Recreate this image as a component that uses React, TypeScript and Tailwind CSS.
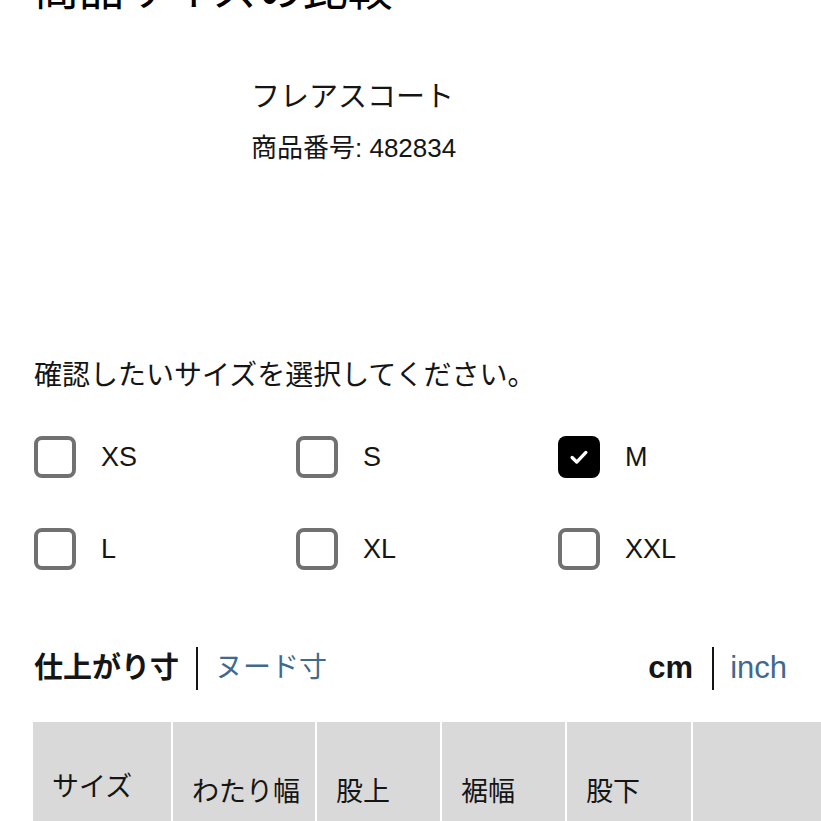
import React from 'react'

const font = {
  fontFamily: '"Liberation Sans", "Noto Sans CJK JP", sans-serif',
}

type SizeOption = { label: string; checked: boolean }

const sizes: SizeOption[] = [
  { label: 'XS', checked: false },
  { label: 'S', checked: false },
  { label: 'M', checked: true },
  { label: 'L', checked: false },
  { label: 'XL', checked: false },
  { label: 'XXL', checked: false },
]

const columns = [
  { label: 'サイズ', pt: 'pt-[47px]' },
  { label: 'わたり幅', pt: 'pt-[52px]' },
  { label: '股上', pt: 'pt-[52px]' },
  { label: '裾幅', pt: 'pt-[52px]' },
  { label: '股下', pt: 'pt-[52px]' },
  { label: '', pt: 'pt-[52px]' },
]

function Checkbox({ checked }: { checked: boolean }) {
  if (checked) {
    return (
      <span className="flex h-[42px] w-[42px] shrink-0 items-center justify-center rounded-[8px] bg-black">
        <svg width="22" height="22" viewBox="0 0 24 24" fill="none" aria-hidden="true">
          <path
            d="M4.5 12.5l5 5L19.5 7"
            stroke="white"
            strokeWidth="3.6"
            strokeLinecap="round"
            strokeLinejoin="round"
          />
        </svg>
      </span>
    )
  }
  return (
    <span className="block h-[42px] w-[42px] shrink-0 rounded-[8px] border-[4px] border-[#717171] bg-white" />
  )
}

export default function App() {
  return (
    <div
      className="h-[821px] w-[821px] overflow-hidden bg-white text-[#151515]"
      style={font}
    >
      {/* title is scrolled partly out of view at the top */}
      <h1 className="-mt-[32px] pl-[34px] text-[45px] leading-[45px] font-normal text-black">
        商品サイズの比較
      </h1>

      <div className="mt-[64px] pl-[251px]">
        <p className="text-[29px] leading-[40px]">フレアスコート</p>
        <p className="mt-[13px] text-[26px] leading-[36px]">商品番号: 482834</p>
      </div>

      <p className="mt-[190px] pl-[34px] text-[28px] leading-[40px]">
        確認したいサイズを選択してください。
      </p>

      <div className="mt-[40px] grid grid-cols-[262px_262px_262px] gap-y-[50px] pl-[34px]">
        {sizes.map((s) => (
          <label key={s.label} className="flex items-center gap-[25px]">
            <Checkbox checked={s.checked} />
            <span className="text-[27px] leading-[42px]">{s.label}</span>
          </label>
        ))}
      </div>

      <div className="mt-[76px] flex h-[44px] items-center justify-between pl-[34px] pr-[34px]">
        <div className="flex items-center">
          <span className="text-[29px] leading-[44px] font-bold">仕上がり寸</span>
          <span className="mx-[17px] h-[43px] w-[2px] bg-[#151515]" />
          <span className="text-[28px] leading-[44px] text-[#3f6a8e]">ヌード寸</span>
        </div>
        <div className="flex items-center">
          <span className="text-[31px] leading-[44px] font-bold">cm</span>
          <span className="ml-[19px] mr-[16px] h-[43px] w-[2px] bg-[#151515]" />
          <span className="text-[31px] leading-[44px] text-[#3f6a8e]">inch</span>
        </div>
      </div>

      <div className="mt-[32px] ml-[33px] grid grid-cols-[138px_142px_123px_123px_124px_1fr] gap-x-[2px] bg-white">
        {columns.map((c, i) => (
          <div
            key={i}
            className={`h-[140px] bg-[#d9d9d9] pl-[19px] text-[27px] leading-[36px] ${c.pt}`}
          >
            {c.label}
          </div>
        ))}
      </div>
    </div>
  )
}
